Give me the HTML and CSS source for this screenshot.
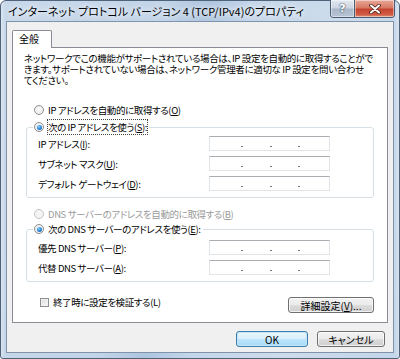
FILE: index.html
```html
<!DOCTYPE html>
<html lang="ja">
<head>
<meta charset="utf-8">
<link rel="stylesheet" href="styles.css">
</head>
<body>
<div class="window">
  <div class="titlebar">
    <span class="title">インターネット プロトコル バージョン 4 (TCP/IPv4)のプロパティ</span>
    <div class="caption">
      <span class="cb help">?</span>
      <span class="cb close"><svg width="12" height="10" viewBox="0 0 12 10"><path d="M2 1.5 L10 8.5 M10 1.5 L2 8.5" stroke="#4a2018" stroke-width="3.6" stroke-linecap="round"/><path d="M2 1.5 L10 8.5 M10 1.5 L2 8.5" stroke="#fff" stroke-width="2" stroke-linecap="round"/></svg></span>
    </div>
  </div>
  <div class="client">
    <div class="tabs"><span class="tab">全般</span></div>
    <div class="panel">
      <p class="intro"><span class="line">ネットワークでこの機能がサポートされている場合は、IP 設定を自動的に取得することがで</span><span class="line">きます。サポートされていない場合は、ネットワーク管理者に適切な IP 設定を問い合わせ</span><span class="line">てください。</span></p>
      <div class="opt"><span class="radio"></span><span>IP アドレスを自動的に取得する(<u>O</u>)</span></div>
      <fieldset class="group ipgroup">
        <legend><span class="opt inline"><span class="radio on"></span><span class="focus">次の IP アドレスを使う(<u>S</u>):</span></span></legend>
        <div class="rows">
          <span class="lbl">IP アドレス(<u>I</u>):</span>
          <span class="ip"><i></i><i></i><i></i></span>
          <span class="lbl">サブネット マスク(<u>U</u>):</span>
          <span class="ip"><i></i><i></i><i></i></span>
          <span class="lbl">デフォルト ゲートウェイ(<u>D</u>):</span>
          <span class="ip"><i></i><i></i><i></i></span>
        </div>
      </fieldset>
      <div class="opt dnsauto disabled"><span class="radio dis"></span><span>DNS サーバーのアドレスを自動的に取得する(<u>B</u>)</span></div>
      <fieldset class="group dnsgroup">
        <legend><span class="opt inline"><span class="radio on"></span><span>次の DNS サーバーのアドレスを使う(<u>E</u>):</span></span></legend>
        <div class="rows">
          <span class="lbl">優先 DNS サーバー(<u>P</u>):</span>
          <span class="ip"><i></i><i></i><i></i></span>
          <span class="lbl">代替 DNS サーバー(<u>A</u>):</span>
          <span class="ip"><i></i><i></i><i></i></span>
        </div>
      </fieldset>
      <div class="bottomrow">
        <span class="check"><span class="box"></span>終了時に設定を検証する(L)</span>
        <span class="btn adv">詳細設定(<u>V</u>)...</span>
      </div>
    </div>
    <div class="footer">
      <span class="btn ok">OK</span>
      <span class="btn cancel">キャンセル</span>
    </div>
  </div>
</div>
</body>
</html>
```
FILE: styles.css
```css
* { box-sizing: border-box; }
html, body { margin: 0; padding: 0; }
body {
  width: 400px;
  height: 359px;
  overflow: hidden;
  background: #fff;
  font-family: "Noto Sans CJK JP", "Noto Sans", sans-serif;
  font-feature-settings: "palt";
  color: #000;
}
u { text-decoration: underline; text-underline-offset: 1px; }

.window {
  width: 400px;
  height: 359px;
  border: 1px solid #4f6278;
  border-radius: 6px 6px 3px 3px;
  background:
    linear-gradient(90deg, rgba(255,255,255,0.35) 0, rgba(255,255,255,0) 4px, rgba(255,255,255,0) 394px, rgba(255,255,255,0.3) 398px),
    linear-gradient(100deg, #c8d8ea 0%, #c2d4e8 35%, #aec5df 45%, #c4d6ea 55%, #cddcec 75%, #c3d5e9 100%);
  display: flex;
  flex-direction: column;
}

.titlebar {
  height: 20px;
  display: flex;
  align-items: flex-start;
  flex: none;
}
.title {
  font-size: 11px;
  line-height: 20px;
  padding-left: 7px;
  white-space: nowrap;
  text-shadow: 0 0 5px #fff, 0 0 8px #fff;
}
.caption {
  margin-left: auto;
  margin-right: 4px;
  margin-top: -1px;
  display: flex;
  height: 18px;
  border: 1px solid #4a5c72;
  border-top: none;
  border-radius: 0 0 4px 4px;
  overflow: hidden;
}
.cb {
  height: 100%;
  display: flex;
  align-items: center;
  justify-content: center;
  box-shadow: inset 0 0 0 1px rgba(255,255,255,0.45);
}
.help {
  width: 24px;
  border-right: 1px solid #4a5c72;
  background: linear-gradient(#e3e9f1 0%, #cdd6e2 45%, #aab8c9 55%, #b7c5d5 100%);
  color: #fff;
  font-family: "DejaVu Sans", sans-serif;
  font-weight: bold;
  font-size: 11px;
  text-shadow: 0 0 2px #33465c, 0 0 1px #33465c;
}
.close {
  width: 39px;
  background: linear-gradient(#eaa898 0%, #d77a66 45%, #c5432f 55%, #cf5c45 85%, #e08c76 100%);
}

.client {
  margin: 0 5px;
  height: 332px;
  border: 1px solid #7f93aa;
  background: #f0f0f0;
  padding: 8px 5px 0 5px;
  font-size: 10px;
  flex: none;
}
.tabs { height: 17px; display: flex; }
.tab {
  width: 40px;
  height: 18px;
  border: 1px solid #898c95;
  border-bottom: none;
  border-radius: 2px 2px 0 0;
  background: #fff;
  padding-left: 6px;
  line-height: 16px;
  font-size: 10px;
  position: relative;
  z-index: 1;
}
.panel {
  height: 276px;
  border: 1px solid #898c95;
  background: #fff;
  padding: 5px 13px 0 11px;
  font-size: 9.5px;
  letter-spacing: -0.4px;
}
.intro {
  margin: 0;
  font-size: 9.5px;
  letter-spacing: -0.35px;
  white-space: nowrap;
}
.intro .line {
  display: block;
  height: 11px;
  line-height: 11px;
}
.opt {
  display: flex;
  align-items: center;
  height: 14px;
  gap: 4px;
  margin-left: 10px;
  white-space: nowrap;
}
.intro + .opt { margin-top: 17px; }
.opt.inline { display: inline-flex; margin-left: 0; padding-left: 1px; padding-right: 2px; }
.radio {
  width: 10px;
  height: 10px;
  border-radius: 50%;
  border: 1px solid #8e8f8f;
  background: radial-gradient(circle at 50% 40%, #fff 0, #f0f0f0 40%, #d4d4d4 100%);
  box-shadow: inset 0 0 0 1px #f4f4f4;
  flex: none;
  position: relative;
}
.radio.on::after {
  content: "";
  position: absolute;
  left: 1.5px;
  top: 1.5px;
  width: 5px;
  height: 5px;
  border-radius: 50%;
  background: radial-gradient(circle at 40% 35%, #8fd0ff 0, #2b89d8 50%, #0f4f9c 100%);
}
.radio.dis { border-color: #c4c4c4; background: #f4f4f4; }
.disabled { color: #9a9a9a; }
.focus { outline: 1px dotted #444; outline-offset: 0; }

.group {
  margin: 3px 0 0 2px;
  padding: 0;
  border: 1px solid #d5dfe5;
  border-radius: 3px;
}
.group legend {
  margin-left: 6px;
  padding: 0;
  height: 14px;
  line-height: 14px;
}
.rows {
  display: grid;
  grid-template-columns: 171px 121px;
  grid-auto-rows: 15px;
  row-gap: 5px;
  padding: 2px 0 6px 11px;
  align-items: center;
}
.dnsgroup .rows { padding-top: 4px; row-gap: 5px; }
.lbl { white-space: nowrap; }
.ip {
  height: 15px;
  border: 1px solid #e0e5ea;
  border-top-color: #abadb3;
  background: #fff;
  display: flex;
  justify-content: space-between;
  align-items: flex-end;
  padding: 0 29px 3px 31px;
}
.ip i {
  width: 2px;
  height: 1px;
  background: #777;
}
.dnsauto { margin-top: 9px; }
.dnsgroup { margin-top: 1px; }

.bottomrow {
  margin-top: 15px;
  display: flex;
  justify-content: space-between;
  align-items: flex-start;
}
.check {
  margin-left: 16px;
  display: flex;
  align-items: center;
  gap: 4px;
  height: 11px;
  line-height: 11px;
  white-space: nowrap;
}
.box {
  width: 9px;
  height: 9px;
  border: 1px solid #8e8f8f;
  background: linear-gradient(135deg, #dcdcdc, #fafafa);
  box-shadow: inset 0 0 0 1px #f2f2f2;
}
.btn {
  height: 16px;
  border: 1px solid #707070;
  border-radius: 3px;
  background: linear-gradient(#f2f2f2 0%, #ebebeb 50%, #dddddd 50%, #cfcfcf 100%);
  box-shadow: inset 0 0 0 1px rgba(255,255,255,0.7);
  display: flex;
  align-items: center;
  justify-content: center;
  font-size: 10px;
  letter-spacing: 0;
  white-space: nowrap;
}
.adv { width: 86px; margin-top: 0; }
.footer {
  display: flex;
  justify-content: flex-end;
  gap: 9px;
  padding: 8px 3px 0 0;
}
.ok {
  width: 72px;
  border-color: #3c7fb1;
  background: linear-gradient(#eaf6fd 0%, #d9f0fc 50%, #bee6fd 50%, #a7d9f5 100%);
  box-shadow: inset 0 0 0 1px #c4e5f6;
}
.cancel { width: 68px; }
```
